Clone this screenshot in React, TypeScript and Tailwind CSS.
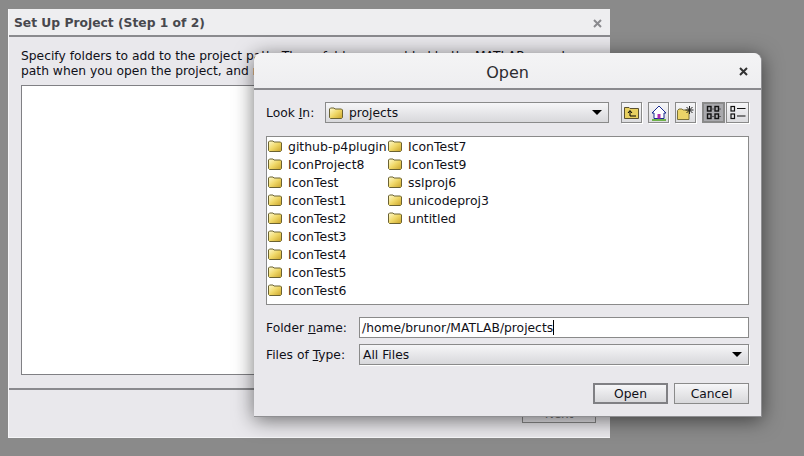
import * as React from "react";

const LEFT_FOLDERS = [
  "github-p4plugin",
  "IconProject8",
  "IconTest",
  "IconTest1",
  "IconTest2",
  "IconTest3",
  "IconTest4",
  "IconTest5",
  "IconTest6",
];
const RIGHT_FOLDERS = ["IconTest7", "IconTest9", "sslproj6", "unicodeproj3", "untitled"];

function Folder({ className = "" }: { className?: string }) {
  return (
    <svg width="14" height="12" viewBox="0 0 14 12" className={className}>
      <defs>
        <linearGradient id="fold" x1="0" y1="0" x2="1" y2="1">
          <stop offset="0" stopColor="#fffbd0" />
          <stop offset="0.5" stopColor="#f0d868" />
          <stop offset="1" stopColor="#c9a32a" />
        </linearGradient>
      </defs>
      <path d="M0.5 2 L1.5 1 H5 L6 2 H12.5 L13.5 3 V10.5 L12.5 11.5 H1.5 L0.5 10.5 Z" fill="url(#fold)" stroke="#6b6232" />
    </svg>
  );
}

function CloseIcon({ color }: { color: string }) {
  return (
    <svg width="9" height="9" viewBox="0 0 9 9">
      <path d="M1 1 L8 8 M8 1 L1 8" stroke={color} strokeWidth="2" />
    </svg>
  );
}

function SquareButton({ children, pressed, wide }: { children: React.ReactNode; pressed?: boolean; wide?: boolean }) {
  if (pressed) {
    return (
      <div className="flex h-[21px] w-[23px] items-center justify-center border-2 border-[#8a8a8a] bg-[#a9a9ad]">
        {children}
      </div>
    );
  }
  return (
    <div
      className={
        wide
          ? "flex h-[21px] w-[23px] items-center justify-center border border-[#8a8a8a] bg-gradient-to-b from-[#f6f6f8] to-[#dcdcdf] shadow-[1px_1px_0_#fff]"
          : "flex h-[21px] w-[21px] items-center justify-center border border-[#8a8a8a] bg-gradient-to-b from-[#f6f6f8] to-[#dcdcdf] shadow-[1px_1px_0_#fff]"
      }
    >
      {children}
    </div>
  );
}

function Arrow() {
  return <div className="h-0 w-0 border-x-[5px] border-t-[5px] border-x-transparent border-t-black" />;
}

function FolderRow({ name }: { name: string }) {
  return (
    <div className="flex h-[18px] items-center">
      <Folder className="ml-px shrink-0" />
      <span className="ml-1.5 whitespace-nowrap pt-px text-[12.45px]">{name}</span>
    </div>
  );
}

export default function App() {
  return (
    <div
      className="relative h-[456px] w-[804px] overflow-hidden bg-[#8a8a8a] text-[12.3px] leading-[15px] text-[#101018]"
      style={{ fontFamily: '"DejaVu Sans", sans-serif' }}
    >
      {/* Back wizard window */}
      <div className="absolute left-2 top-[9px] flex h-[429px] w-[602px] flex-col border-b border-l border-[#f6f6f8] bg-[#e9e8ec]">
        <div className="flex h-[28px] shrink-0 items-center justify-between border-b-2 border-[#8a8a8e] bg-[#eeeef0] pl-[5px] pr-2 pt-0.5">
          <span className="font-bold text-[#48484e]">Set Up Project (Step 1 of 2)</span>
          <CloseIcon color="#8a8a8e" />
        </div>
        <div className="flex flex-1 flex-col px-3 pt-[12px]">
          <p className="whitespace-nowrap">Specify folders to add to the project path. These folders are added to the MATLAB search</p>
          <p className="whitespace-nowrap">path when you open the project, and removed from the path when you close the project.</p>
          <div className="mt-[6px] h-[290px] w-full border border-[#808084] bg-white" />
        </div>
        <div className="flex h-[49px] shrink-0 items-end justify-end border-t-2 border-[#8a8a8e] pb-[14px] pr-[14px]">
          <div className="flex h-[20px] w-[74px] items-center justify-center border border-[#8a8a8a] pt-0.5 text-[#777]">Next</div>
        </div>
      </div>

      {/* Open file dialog */}
      <div className="absolute left-[254px] top-[53px] flex h-[364px] w-[508px] flex-col rounded-t-[8px] border-b border-r border-[#8f8f92] bg-[#e9e8ec] shadow-[0_3px_20px_rgba(0,0,0,0.55)]">
        <div className="relative flex h-[37px] shrink-0 items-center justify-center rounded-t-[8px] border-b-2 border-[#8a8a8e] bg-gradient-to-b from-[#f4f4f5] to-[#eeeef0] pt-1">
          <span className="text-[16px] text-[#2c2c30]">Open</span>
          <span className="absolute right-[13px] top-[14px] flex">
            <CloseIcon color="#333333" />
          </span>
        </div>

        <div className="flex flex-1 flex-col pl-3 pr-3 pt-3">
          {/* Look in row */}
          <div className="flex h-[21px] items-center">
            <label className="w-[59px] pt-0.5">
              Look <u>I</u>n:
            </label>
            <div className="flex h-[21px] w-[284px] items-center border border-[#8a8a8a] bg-gradient-to-b from-[#f6f6f8] to-[#d8d8db] pl-[3px] pr-1.5">
              <Folder />
              <span className="ml-[6px] flex-1 pt-0.5">projects</span>
              <Arrow />
            </div>
            <div className="ml-3 flex items-center">
              <SquareButton>
                <svg width="15" height="13" viewBox="0 0 15 13">
                  <path d="M0.5 1.5 H5 L6 2.5 H14.5 V12.5 H0.5 Z" fill="#e8d060" stroke="#5a5030" />
                  <path d="M6 10 V5 M4 7 L6 4.5 L8 7 M6 10 H12" fill="none" stroke="#000" />
                </svg>
              </SquareButton>
              <div className="ml-1.5">
                <SquareButton>
                  <svg width="16" height="16" viewBox="0 0 16 16">
                    <path d="M8 1 L15 8 H13 V13.5 H3 V8 H1 Z" fill="#fff" stroke="#1a2a90" />
                    <rect x="6.5" y="9" width="3" height="4.5" fill="#b02ab0" />
                    <rect x="1" y="14" width="14" height="2" fill="#6fb24a" />
                  </svg>
                </SquareButton>
              </div>
              <div className="ml-1.5">
                <SquareButton>
                  <svg width="17" height="14" viewBox="0 0 17 14">
                    <path d="M0.5 4.5 L2 3 H5 L6 4 H12 V13.5 H0.5 Z" fill="#ecd468" stroke="#7a7038" />
                    <path d="M12.5 0 V8 M8.5 4 H16.5 M9.5 1 L15.5 7 M15.5 1 L9.5 7" stroke="#222" />
                  </svg>
                </SquareButton>
              </div>
              <div className="ml-1.5 flex">
                <SquareButton pressed>
                  <svg width="15" height="15" viewBox="0 0 15 15" fill="none" stroke="#111" strokeWidth="1.4">
                    <rect x="1.5" y="1.5" width="3.5" height="4.5" />
                    <rect x="9" y="1.5" width="3.5" height="4.5" />
                    <rect x="1.5" y="9" width="3.5" height="4.5" />
                    <rect x="9" y="9" width="3.5" height="4.5" />
                    <path d="M6.5 4 H7.5 M13.5 4 H14.5 M6.5 11.5 H7.5 M13.5 11.5 H14.5" strokeWidth="1" />
                  </svg>
                </SquareButton>
                <div className="ml-px">
                  <SquareButton wide>
                    <svg width="16" height="15" viewBox="0 0 16 15" fill="none" stroke="#111" strokeWidth="1.2">
                      <rect x="1" y="1.5" width="3.5" height="4.5" />
                      <rect x="1" y="9" width="3.5" height="4.5" />
                      <path d="M7 3.5 H15.5 M7 11 H15.5" />
                    </svg>
                  </SquareButton>
                </div>
              </div>
            </div>
          </div>

          {/* Folder list */}
          <div className="mt-[13px] flex h-[169px] w-[483px] border border-[#8a8a8a] bg-white">
            <div className="w-[120px] shrink-0">
              {LEFT_FOLDERS.map((name) => (
                <FolderRow key={name} name={name} />
              ))}
            </div>
            <div>
              {RIGHT_FOLDERS.map((name) => (
                <FolderRow key={name} name={name} />
              ))}
            </div>
          </div>

          {/* Name and type */}
          <div className="mt-3 flex h-[21px] items-center">
            <label className="w-[93px] pt-0.5">
              Folder <u>n</u>ame:
            </label>
            <div className="flex h-[21px] flex-1 items-center border border-[#8a8a8a] bg-white px-[2px]">
              <span className="pt-0.5">/home/brunor/MATLAB/projects</span>
              <span className="h-[15px] w-px bg-black" />
            </div>
          </div>
          <div className="mt-1.5 flex h-[21px] items-center">
            <label className="w-[93px] pt-0.5">
              Files of <u>T</u>ype:
            </label>
            <div className="flex h-[21px] flex-1 items-center justify-between border border-[#8a8a8a] bg-gradient-to-b from-[#f6f6f8] to-[#d8d8db] pl-[3px] pr-1.5 shadow-[1px_1px_0_#fff]">
              <span className="pt-0.5">All Files</span>
              <Arrow />
            </div>
          </div>

          {/* Actions */}
          <div className="mt-[18px] flex justify-end gap-1.5">
            <button className="flex h-[21px] w-[75px] items-center justify-center border-2 border-[#808084] bg-gradient-to-b from-[#f6f6f8] to-[#d8d8db] pt-px">
              Open
            </button>
            <button className="flex h-[21px] w-[75px] items-center justify-center border border-[#8a8a8a] bg-gradient-to-b from-[#f6f6f8] to-[#d8d8db] pt-px">
              Cancel
            </button>
          </div>
        </div>
      </div>
    </div>
  );
}
